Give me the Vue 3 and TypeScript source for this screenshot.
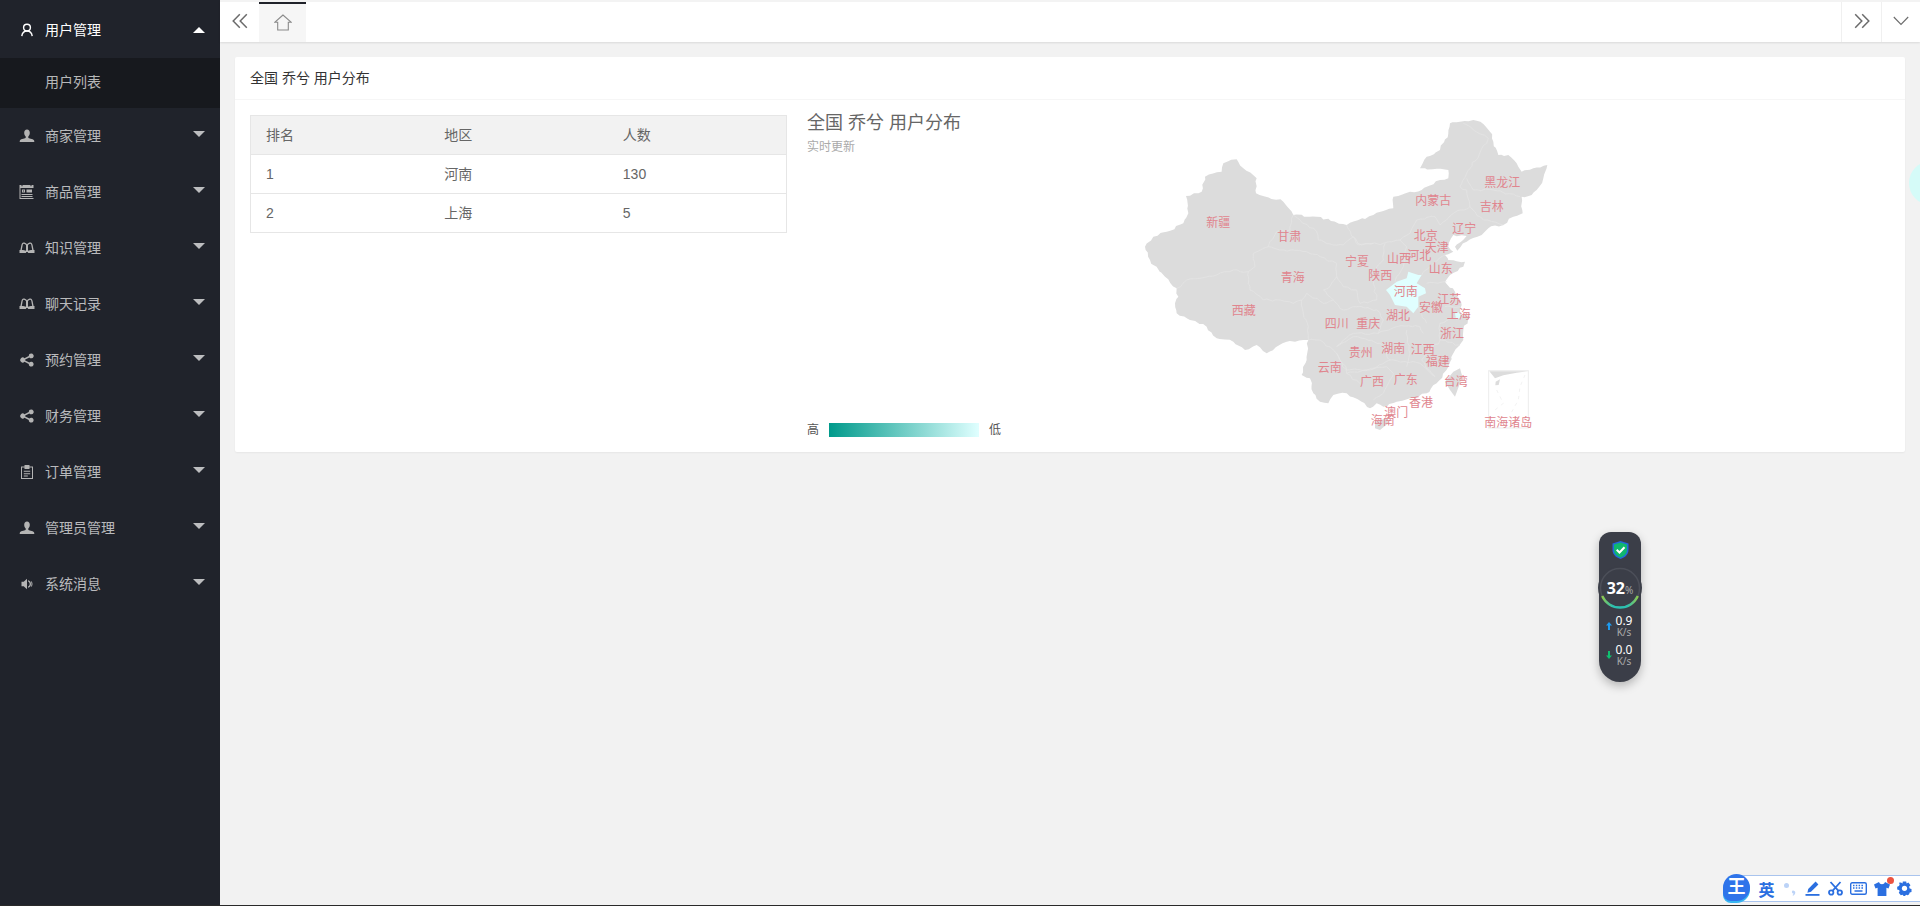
<script setup lang="ts">
interface MenuItem { name: string; icon: string }
const menu: MenuItem[] = [
  { name: '商家管理', icon: 'person' },
  { name: '商品管理', icon: 'calendar' },
  { name: '知识管理', icon: 'book' },
  { name: '聊天记录', icon: 'book' },
  { name: '预约管理', icon: 'share' },
  { name: '财务管理', icon: 'share' },
  { name: '订单管理', icon: 'clip' },
  { name: '管理员管理', icon: 'person' },
  { name: '系统消息', icon: 'speaker' }
]
const rows = [
  { rank: 1, area: '河南', count: 130 },
  { rank: 2, area: '上海', count: 5 }
]

// Borders are traced coarsely, then roughened so they read like map geography.
function roughen(points: string, amp: number, closed = false): string {
  const pts = points.split(' ').map((p) => p.split(',').map(Number))
  if (closed) pts.push(pts[0])
  const out: string[] = []
  let seed = 7
  const rnd = () => {
    seed = (seed * 9301 + 49297) % 233280
    return seed / 233280 - 0.5
  }
  for (let i = 0; i < pts.length - 1; i++) {
    const [x0, y0] = pts[i]
    const [x1, y1] = pts[i + 1]
    const steps = Math.max(1, Math.round(Math.hypot(x1 - x0, y1 - y0) / 12))
    for (let s = 0; s < steps; s++) {
      const t = s / steps
      const j = s === 0 ? 0 : amp
      out.push(`${(x0 + (x1 - x0) * t + rnd() * j).toFixed(1)},${(y0 + (y1 - y0) * t + rnd() * j).toFixed(1)}`)
    }
  }
  if (!closed) out.push(pts[pts.length - 1].join(','))
  return out.join(' ')
}

const outline = roughen('990,70 1020,65 1060,60 1090,72 1110,95 1120,125 1135,165 1165,165 1190,190 1205,215 1240,205 1282,195 1270,235 1250,270 1235,285 1205,290 1208,340 1180,350 1150,375 1105,385 1085,405 1040,425 1012,452 1005,440 1040,408 1000,405 985,440 1000,455 975,465 985,480 1035,485 1030,500 990,525 975,545 1005,575 1025,615 1020,640 1050,650 1030,690 1030,720 1000,760 985,800 950,850 920,880 870,895 830,905 790,920 770,910 750,925 725,905 680,880 640,885 625,910 600,905 580,880 570,835 545,825 560,780 565,720 550,720 500,725 440,760 410,735 375,750 340,725 290,715 260,680 210,660 170,640 165,610 175,590 170,565 135,530 100,495 90,480 75,440 100,410 140,395 190,370 205,340 198,288 245,275 255,230 305,215 310,190 350,178 370,205 410,235 408,280 490,305 520,345 590,350 680,375 760,345 820,325 820,290 870,275 905,270 960,240 985,235 985,210 900,205 920,170 960,150 985,100', 7, true)
const borders = [
  '520,345 510,390 470,395 445,440 400,460 405,500 385,515 340,510 290,525 240,535 200,540 170,565',
  '385,515 390,570 430,600 480,600 520,610 545,600 550,640 565,680 565,720',
  '520,345 590,395 595,420 640,435 670,435 700,410 725,435 760,430',
  '445,440 480,450 560,455 600,470 650,490 650,530 625,565 610,570 640,600 610,610 560,580 545,600',
  '680,375 715,435 790,430 840,420 870,400 890,360 945,350 960,375 1000,340 1020,330 1050,320 1040,270 1020,260 1040,220 1100,130 1105,115 1060,90 1030,70',
  '1040,235 1060,270 1120,270 1200,290',
  '1050,320 1090,360 1150,375',
  '795,430 790,480 770,500 760,550 770,600 720,610 710,570 670,560 650,530',
  '840,420 860,440 850,500 825,545',
  '905,525 940,490 975,465',
  '640,600 670,630 710,620 770,630 790,660 775,700 700,700 650,740',
  '775,700 830,680 900,680 910,700',
  '650,740 700,710 780,730 810,780 750,810 680,810 650,760',
  '565,720 600,720 650,760 680,820 720,850',
  '680,820 800,800 820,820 790,880 760,900',
  '860,690 870,760 860,800',
  '810,780 900,790 945,830',
  '945,830 905,780 960,720 1020,735',
  '960,720 960,670 1020,650',
  '920,550 980,545',
  '975,620 1020,620',
  '895,620 920,670'
].map((b) => roughen(b, 7))
const henan = '865,515 895,525 905,525 890,550 915,565 918,580 895,590 895,620 880,640 860,620 825,615 810,585 798,570 830,545 860,535'
const labels: [string, number, number][] = [
  ['黑龙江', 1147, 247], ['内蒙古', 940, 300], ['吉林', 1115, 320], ['新疆', 295, 367], ['辽宁', 1033, 386],
  ['甘肃', 508, 410], ['北京', 917, 406], ['天津', 950, 442], ['河北', 898, 466], ['山西', 837, 475],
  ['宁夏', 711, 484], ['山东', 962, 506], ['陕西', 781, 526], ['青海', 518, 532], ['河南', 857, 575],
  ['江苏', 988, 598], ['安徽', 933, 623], ['西藏', 371, 632], ['上海', 1016, 644], ['湖北', 834, 647],
  ['四川', 650, 670], ['重庆', 745, 671], ['浙江', 996, 701], ['湖南', 820, 746], ['江西', 908, 748],
  ['贵州', 722, 758], ['福建', 953, 785], ['云南', 629, 802], ['台湾', 1007, 845], ['广西', 756, 844],
  ['广东', 857, 837], ['香港', 903, 908], ['澳门', 829, 937], ['海南', 788, 961], ['南海诸岛', 1165, 966]
]
</script>

<template>
  <div class="app">
    <aside class="side">
      <div class="item active">
        <svg class="ico" viewBox="0 0 16 16" fill="none" stroke="#fff" stroke-width="1.4">
          <circle cx="8" cy="5.6" r="3.4" />
          <path d="M2.8 14.2c.4-3.4 2.5-5.2 5.2-5.2s4.800 1.800 5.200 5.200" />
        </svg>
        <span>用户管理</span>
        <i class="caret up"></i>
      </div>
      <div class="child">用户列表</div>
      <div v-for="m in menu" :key="m.name" class="item">
        <svg class="ico" viewBox="0 0 16 16" fill="#b4b4b4">
          <path v-if="m.icon === 'person'" d="M8 1.500c1.800 0 2.800 1.300 2.800 3.200 0 1.600-.7 3-1.500 3.700v1.300c0 .6 4.700 1.100 5.700 2.500.3.500.3 1.300.3 1.800H.7c0-.5 0-1.300.3-1.800 1-1.400 5.700-1.900 5.700-2.500V8.400C5.900 7.700 5.200 6.300 5.200 4.700 5.200 2.800 6.200 1.500 8 1.500z" />
          <path v-else-if="m.icon === 'calendar'" fill-rule="evenodd" d="M.5 1h2v1.200h1V1h8v1.200h1V1h2v14H.5V1zm1 3v10h13V4h-13zm1.500 1.500h3v3H3v-3zm1 1v1h1v-1H4zm3.500-1h5.500v3H7.500v-3zM2.500 10h11v1h-11v-1zm0 2h11v1h-11v-1z" />
          <path v-else-if="m.icon === 'book'" fill-rule="evenodd" d="M8 4.200C7 3 5.800 2.500 4.500 2.500 3.400 2.500 2.800 3.400 2.400 5L1.400 10H.5v3h6.300l.6-1h1.200l.6 1h6.300v-3h-.9l-1-5c-.4-1.600-1-2.500-2.100-2.500-1.300 0-2.500.5-3.500 1.700zM4.600 3.800c.8 0 1.600.4 2.400 1.200v5.800c-1.100-.5-2.400-.8-4.200-.8l.9-5c.2-.8.500-1.200.9-1.200zm6.800 0c.4 0 .7.400.9 1.200l.9 5c-1.800 0-3.100.3-4.200.8V5c.8-.8 1.600-1.200 2.400-1.200z" />
          <path v-else-if="m.icon === 'share'" d="M12.300 1.500a2.400 2.400 0 1 1-1.900 3.900L6.200 7.400a2.500 2.500 0 0 1 0 1.200l4.200 2a2.400 2.400 0 1 1-.6 1.300L5.500 9.800a2.500 2.500 0 1 1 0-3.600l4.300-2.100a2.400 2.400 0 0 1 2.500-2.600z" />
          <path v-else-if="m.icon === 'clip'" fill-rule="evenodd" d="M5.500 1h5v1.500H14V15H2V2.500h3.500V1zM3 3.500v10.500h10V3.500h-2.500V5h-5V3.500H3zm1.800 3.300h6.400v1H4.800v-1zm0 2.400h6.400v1H4.800v-1zm0 2.300h4v1h-4v-1z" />
          <path v-else d="M2.500 5.700h2.200L8 2.700v10.600l-3.300-3H2.500V5.700zM9 4.200c1.900.4 3 2 3 3.800s-1.100 3.400-3 3.800v-1.300c1-.3 1.700-1.300 1.700-2.500S10 5.800 9 5.500V4.200zm3.500 1c.7.800 1 1.800 1 2.800s-.3 2-1 2.800l-.6-.4c.4-.7.6-1.500.6-2.400s-.2-1.700-.6-2.400l.6-.4z" />
        </svg>
        <span class="item-text">{{ m.name }}</span>
        <i class="caret"></i>
      </div>
    </aside>

    <main class="main">
      <header class="tabs">
        <button class="tab-btn">
          <svg width="16" height="16" viewBox="0 0 16 16" fill="none" stroke="#6b6b6b" stroke-width="1.500">
            <path d="M7.800 1.200 1.200 8l6.600 6.800M14.800 1.200 8.200 8l6.600 6.800" />
          </svg>
        </button>
        <div class="tab-home">
          <svg width="18" height="17" viewBox="0 0 18 17" fill="none" stroke="#8a8a8a" stroke-width="1.100">
            <path d="M9 1 1 8.200h2.700v7.800h10.600V8.200H17L9 1z" />
          </svg>
        </div>
        <div class="grow"></div>
        <button class="tab-btn bordered">
          <svg width="16" height="16" viewBox="0 0 16 16" fill="none" stroke="#6b6b6b" stroke-width="1.500">
            <path d="M1.200 1.200 7.800 8l-6.600 6.800M8.200 1.200 14.800 8l-6.600 6.800" />
          </svg>
        </button>
        <button class="tab-btn bordered last">
          <svg width="16" height="10" viewBox="0 0 16 10" fill="none" stroke="#6b6b6b" stroke-width="1.100">
            <path d="M.8 1 8 8.500 15.200 1" />
          </svg>
        </button>
      </header>

      <section class="content">
        <div class="card">
          <div class="card-head">全国 乔兮 用户分布</div>
          <div class="card-body">
            <table class="table">
              <thead>
                <tr><th>排名</th><th>地区</th><th>人数</th></tr>
              </thead>
              <tbody>
                <tr v-for="r in rows" :key="r.rank">
                  <td>{{ r.rank }}</td><td class="cjk">{{ r.area }}</td><td>{{ r.count }}</td>
                </tr>
              </tbody>
            </table>
            <div class="chart">
              <div class="chart-title">全国 乔兮 用户分布</div>
              <div class="chart-sub">实时更新</div>
              <svg class="map" width="460" height="340" viewBox="0 0 460 340">
                <g transform="scale(.33333)">
                  <polygon :points="outline" fill="#dcdcdc" />
                  <polygon points="1020,805 1027,830 1005,890 990,870 975,845 1000,815" fill="#dcdcdc" />
                  <polygon points="765,965 800,955 805,970 780,990 765,985" fill="#dcdcdc" />
                  <polyline v-for="(b, i) in borders" :key="i" :points="b" fill="none" stroke="#e6e6e6" stroke-width="2" />
                  <polygon :points="henan" fill="#e0ffff" />
                  <polygon points="1005,640 1020,636 1022,655 1008,658" fill="#e0ffff" />
                  <rect x="1106" y="812" width="119" height="172" fill="#fff" stroke="#ececec" stroke-width="3" />
                  <polygon points="1108,814 1224,814 1190,818 1150,826 1125,835" fill="#dcdcdc" />
                  <polygon points="1127,845 1140,838 1136,855 1126,856" fill="#dcdcdc" />
                  <polyline points="1215,825 1200,860 1195,900 1170,945" fill="none" stroke="#ececec" stroke-width="2" stroke-dasharray="10 12" />
                  <polyline points="1130,870 1150,910 1125,930" fill="none" stroke="#ececec" stroke-width="2" stroke-dasharray="10 12" />
                </g>
                <text v-for="l in labels" :key="l[0]" class="lbl" :x="l[1] / 3" :y="l[2] / 3 + 4.500" text-anchor="middle">{{ l[0] }}</text>
              </svg>
              <div class="legend">
                <span>高</span>
                <i class="ramp"></i>
                <span>低</span>
              </div>
            </div>
          </div>
        </div>
      </section>
    </main>

    <div class="blob"></div>

    <div class="widget">
      <svg width="17" height="18" viewBox="0 0 17 18">
        <path d="M8.500 0 16.500 2.600V9c0 4.300-3.300 7.500-8 9-4.700-1.500-8-4.700-8-9V2.600L8.500 0z" fill="#2468dc" />
        <path d="M8.500 1.400 15 3.500V9c0 3.500-2.600 6.200-6.500 7.500C4.600 15.200 2 12.500 2 9V3.500l6.500-2.100z" fill="#10b76e" />
        <path d="M4.700 8.800 7.500 11.500 12.500 6.200" fill="none" stroke="#fff" stroke-width="2" />
      </svg>
      <div class="gauge">
        <svg width="46" height="46" viewBox="0 0 46 46" fill="none">
          <defs>
            <linearGradient id="gaugeGrad" x1="0" x2="1" y1="0" y2="0">
              <stop offset="0" stop-color="#8fc850" />
              <stop offset=".3" stop-color="#2bbfb0" />
              <stop offset=".7" stop-color="#2bbfb0" />
              <stop offset="1" stop-color="#8fc850" />
            </linearGradient>
          </defs>
          <circle cx="23" cy="23" r="22" fill="#3b3e48" />
          <circle cx="23" cy="23" r="19.500" stroke="#4c4f59" stroke-width="1.500" />
          <path d="M5.200 31A19.500 19.500 0 0 0 40.800 31" stroke="url(#gaugeGrad)" stroke-width="2.400" />
        </svg>
        <div class="gauge-text"><b>32</b><small>%</small></div>
      </div>
      <div class="rate up-rate">
        <svg width="6" height="8" viewBox="0 0 6 8"><path d="M3 0 6 3.600H4V8H2V3.600H0L3 0z" fill="#1e9bf0" /></svg>
        <div><b>0.9</b><small>K/s</small></div>
      </div>
      <div class="rate">
        <svg width="6" height="8" viewBox="0 0 6 8"><path d="M3 8 0 4.400H2V0H4V4.400H6L3 8z" fill="#10c070" /></svg>
        <div><b>0.0</b><small>K/s</small></div>
      </div>
    </div>

    <div class="ime">
      <div class="ime-logo">王</div>
      <div class="cell zh">英</div>
      <div class="cell">
        <svg width="14" height="14" viewBox="0 0 14 14">
          <circle cx="3.500" cy="3.500" r="2.500" fill="#bcd3f7" />
          <path d="M10 8.500c1.500 0 2.300 1 2.300 2 0 1.500-1 2.600-2.300 3.200l-.4-.6c.6-.5 1-1 1-1.500-1 0-1.700-.6-1.700-1.500s.6-1.600 1.100-1.600z" fill="#bcd3f7" />
        </svg>
      </div>
      <div class="cell">
        <svg width="15" height="15" viewBox="0 0 15 15" fill="#2b6fe0">
          <path d="M10.600.6 13.400 3.400 6 10.800l-3.600.9.800-3.700L10.600.6z" />
          <rect x="0.500" y="13" width="14" height="1.800" />
        </svg>
      </div>
      <div class="cell">
        <svg width="15" height="15" viewBox="0 0 15 15" fill="none" stroke="#2b6fe0" stroke-width="1.800">
          <circle cx="3.200" cy="11.500" r="2.200" />
          <circle cx="11.800" cy="11.500" r="2.200" />
          <path d="M4.500 9.800 12.500 1M10.500 9.800 2.500 1" />
        </svg>
      </div>
      <div class="cell">
        <svg width="17" height="13" viewBox="0 0 17 13">
          <rect x=".7" y=".7" width="15.600" height="11.600" rx="1.500" fill="none" stroke="#2b6fe0" stroke-width="1.400" />
          <path d="M3 3.500h1.500M5.800 3.500h1.500M8.600 3.500h1.500M11.400 3.500H13M3 6h1.500M5.800 6h1.500M8.600 6h1.500M11.400 6H13M4.500 9h8" stroke="#2b6fe0" stroke-width="1.400" />
        </svg>
      </div>
      <div class="cell shirt">
        <svg width="16" height="15" viewBox="0 0 16 15" fill="#2b6fe0">
          <path d="M5 1 0 3.500l1.500 4L3.600 6.700V15h8.800V6.700l2.100.8 1.500-4L11 1C10.500 2.500 9.400 3.200 8 3.200S5.500 2.500 5 1z" />
        </svg>
        <i class="dot"></i>
      </div>
      <div class="cell">
        <svg width="15" height="15" viewBox="0 0 15 15">
          <path d="M5.800.5h3.400l.4 2 1.800-.9 2.100 2.600-1.400 1.500.6 1.800 1.800.6v2.800l-1.800.6-.6 1.700-1.300 1-1.800-.5-1 1.300H6.600l-1-1.300-1.800.5-2-2.400.9-1.700L2 9.100.2 8.500V5.700L2 5.100l.7-1.800-.8-1.500L4 1.600l1.500.9.300-2z" fill="#2b6fe0" />
          <circle cx="7.500" cy="7.300" r="2.600" fill="#fff" />
        </svg>
      </div>
    </div>

    <div class="edge"></div>
  </div>
</template>

<style>
html, body { margin: 0; padding: 0; }
</style>

<style scoped>
.app {
  position: relative;
  display: flex;
  width: 1920px;
  height: 906px;
  overflow: hidden;
  background: #f2f2f2;
  font-family: "Liberation Sans", "Noto Sans CJK SC", sans-serif;
  font-size: 14px;
  color: #666;
}
.side {
  flex: none;
  width: 220px;
  padding-top: 2px;
  box-sizing: border-box;
  background: #20232b;
  color: rgba(255, 255, 255, .7);
}
.item {
  display: flex;
  align-items: center;
  height: 56px;
  padding-left: 19px;
}
.item span { margin-top: -2px; }
.item.active { color: #fff; }
.ico { width: 16px; height: 16px; margin-right: 10px; flex: none; }
.caret {
  margin-left: auto;
  margin-right: 15px;
  margin-top: -4px;
  width: 0;
  height: 0;
  border: 6px solid transparent;
  border-top-color: rgba(255, 255, 255, .7);
  border-bottom-width: 0;
}
.caret.up {
  margin-top: 0;
  border-top-width: 0;
  border-top-color: transparent;
  border-bottom: 6px solid #fff;
}
.child {
  height: 48px;
  line-height: 48px;
  padding: 0 0 2px 45px;
  background: #17191e;
  color: rgba(255, 255, 255, .7);
}
.main {
  flex: 1;
  min-width: 0;
  display: flex;
  flex-direction: column;
}
.tabs {
  flex: none;
  display: flex;
  height: 42px;
  box-sizing: border-box;
  background: #fff;
  border-top: 2px solid #f3f3f3;
  box-shadow: 0 1px 2px rgba(0, 0, 0, .1);
}
.grow { flex: 1; }
.tab-btn {
  width: 39px;
  padding: 0 0 2px;
  display: flex;
  align-items: center;
  justify-content: center;
  border: 0;
  background: #fff;
}
.tab-btn.bordered { width: 40px; border-left: 1px solid #f0f0f0; }
.tab-btn.last { width: 39px; }
.tab-home {
  width: 47px;
  padding-bottom: 2px;
  box-sizing: border-box;
  display: flex;
  align-items: center;
  justify-content: center;
  background: #f6f6f6;
  border-top: 2px solid #20222a;
}
.content { padding: 15px; }
.card {
  height: 395px;
  background: #fff;
  border-radius: 2px;
  box-shadow: 0 1px 2px rgba(0, 0, 0, .05);
  display: flex;
  flex-direction: column;
}
.card-head {
  flex: none;
  height: 42px;
  line-height: 42px;
  padding: 0 15px;
  color: #333;
  border-bottom: 1px solid #f6f6f6;
}
.card-body {
  flex: 1;
  display: flex;
  gap: 20px;
  padding: 15px;
}
.table {
  flex: none;
  width: 537px;
  height: 118px;
  box-sizing: border-box;
  border-collapse: collapse;
  table-layout: fixed;
  align-self: flex-start;
}
.table th, .table td {
  height: 39px;
  box-sizing: border-box;
  padding: 0 15px;
  border: 1px solid #e6e6e6;
  border-left: 0;
  border-right: 0;
  text-align: left;
  font-weight: 400;
  color: #666;
}
.table th, .table td.cjk { padding-bottom: 2px; }
.table th:first-child, .table td:first-child { border-left: 1px solid #e6e6e6; }
.table th:last-child, .table td:last-child { border-right: 1px solid #e6e6e6; }
.table th { background: #f2f2f2; }
.chart { position: relative; flex: 1; }
.chart-title { font-size: 18px; line-height: 24px; margin-top: -4px; color: #666; }
.chart-sub { font-size: 12px; line-height: 16px; margin-top: 4px; color: #aaa; }
.map { position: absolute; left: 313px; top: -15px; overflow: visible; }
.lbl { font-size: 12px; fill: #e0858e; font-family: "Liberation Sans", "Noto Sans CJK SC", sans-serif; }
.legend {
  position: absolute;
  left: 0;
  top: 308px;
  display: flex;
  align-items: center;
  gap: 10px;
  height: 14px;
  font-size: 12px;
  color: #555;
}
.legend span { margin-top: -3px; }
.ramp {
  width: 150px;
  height: 14px;
  background: linear-gradient(90deg, #009a8b, #e0ffff);
}
.blob {
  position: absolute;
  left: 1909px;
  top: 161px;
  width: 44px;
  height: 44px;
  border-radius: 50%;
  background: #d5fbf8;
}
.widget {
  position: absolute;
  left: 1599px;
  top: 532px;
  width: 42px;
  height: 150px;
  border-radius: 12px 12px 21px 21px;
  background: #3b3e48;
  box-shadow: 0 4px 10px rgba(0, 0, 0, .25);
  display: flex;
  flex-direction: column;
  align-items: center;
  padding-top: 9px;
  box-sizing: border-box;
}
.gauge {
  position: relative;
  width: 46px;
  height: 46px;
  flex: none;
  margin: 6px -2px 0;
}
.gauge svg { display: block; }
.gauge-text {
  position: absolute;
  inset: 0;
  display: flex;
  align-items: baseline;
  justify-content: center;
  line-height: 46px;
  color: #fff;
  font-family: "Noto Sans", sans-serif;
}
.gauge-text b { font-size: 16px; }
.gauge-text small { font-size: 10px; color: #aaa; }
.rate {
  display: flex;
  align-items: center;
  gap: 4px;
  margin-top: 7px;
  margin-left: -2px;
  color: #fff;
  font-family: "Noto Sans", sans-serif;
}
.up-rate { margin-top: 4px; }
.rate div { display: flex; flex-direction: column; align-items: center; }
.rate b { font-size: 12px; line-height: 12px; font-weight: 400; }
.rate small { font-size: 10px; line-height: 10px; color: #aaa; }
.ime {
  position: absolute;
  right: 0;
  top: 875px;
  height: 27px;
  box-sizing: border-box;
  display: flex;
  align-items: center;
  padding: 0 4px 0 19px;
  background: #fff;
  border: 1px solid #a9c4ee;
  border-right: 0;
}
.ime-logo {
  position: absolute;
  left: -13px;
  top: -2px;
  width: 27px;
  height: 27px;
  border-radius: 50% 50% 50% 8px;
  background: #2f74ea;
  color: #fff;
  font-size: 18px;
  font-weight: 700;
  line-height: 27px;
  text-align: center;
  box-shadow: 0 2px 0 #39b6f0;
}
.cell {
  position: relative;
  width: 23px;
  height: 23px;
  display: flex;
  align-items: center;
  justify-content: center;
}
.zh { color: #2b6fe0; font-size: 16px; font-weight: 700; }
.dot {
  position: absolute;
  right: -1px;
  top: 0;
  width: 7px;
  height: 7px;
  border-radius: 50%;
  background: #ec5340;
}
.edge {
  position: absolute;
  left: 0;
  right: 0;
  bottom: 0;
  height: 1px;
  background: #2a2a2a;
}
</style>
